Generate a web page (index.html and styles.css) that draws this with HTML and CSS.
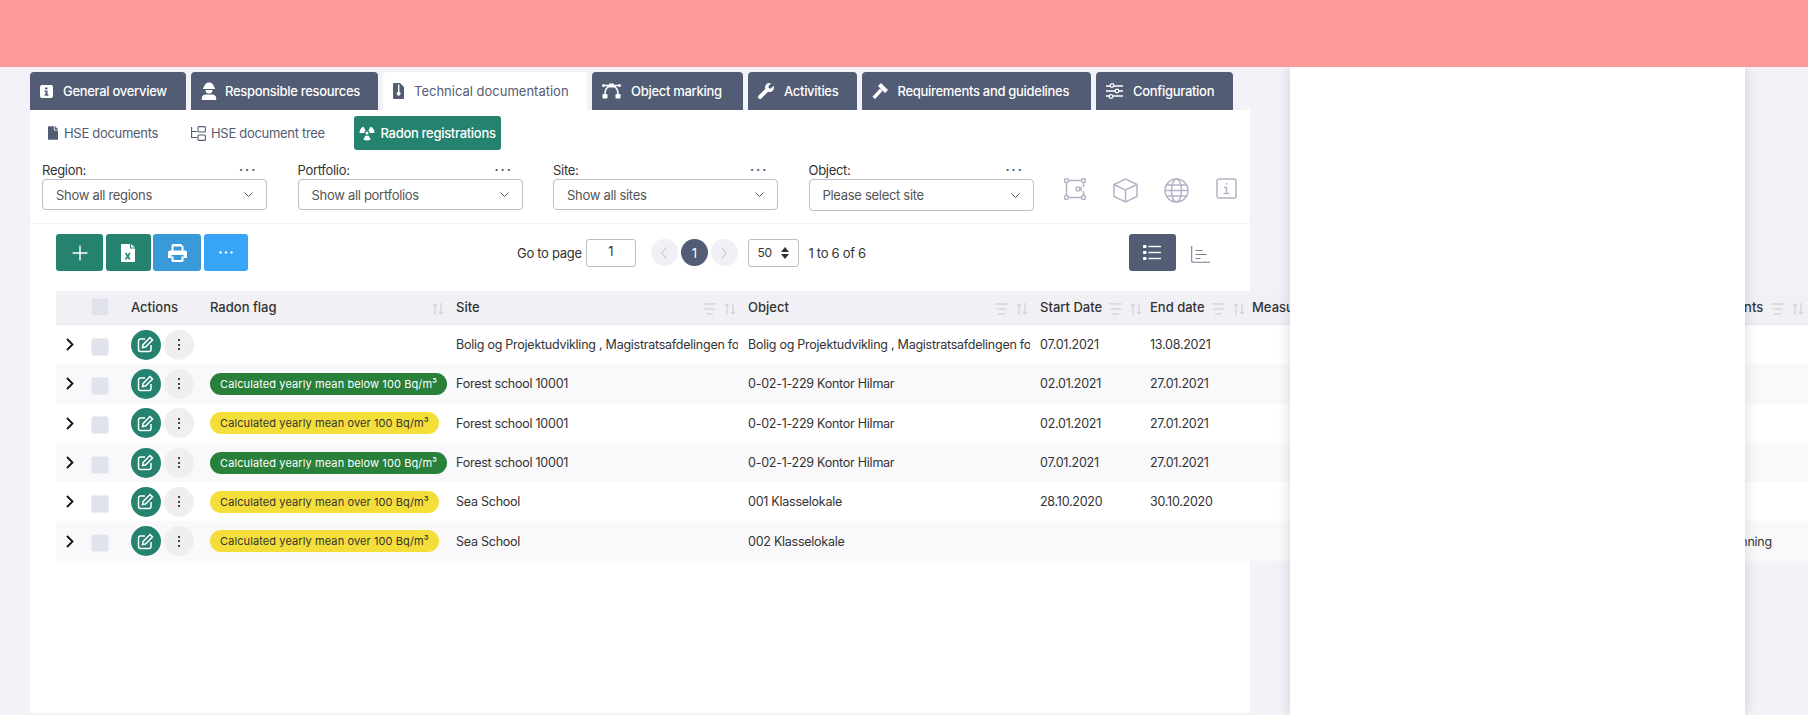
FILE: index.html
```html
<!DOCTYPE html>
<html lang="en">
<head>
    <meta charset="UTF-8">
    <meta name="viewport" content="width=device-width, initial-scale=1.0">
    <title>Radon registrations</title>
    <link rel="stylesheet" href="styles.css">
</head>
<body>
    <div class="topbar"></div>

    <div class="content">
        <div class="tabs">
            <div class="tab">
                <svg width="13" height="13" viewBox="0 0 13 13"><rect width="13" height="13" rx="2" fill="#fff"/><rect x="5" y="2.5" width="2.5" height="1.8" fill="#525c74"/><path d="M4.5 5.5h3v4h1v1.2h-4V9.500h1V6.700h-1z" fill="#525c74"/></svg>
                General overview
            </div>
            <div class="tab tab-people">
                <svg width="16" height="18" viewBox="0 0 16 18" fill="#fff"><path d="M3 5.500a5 5 0 0 1 10 0h1V7H2V5.500z"/><path d="M4.500 8h7a3.500 3.500 0 0 1-7 0z"/><path d="M.8 18v-2a4 4 0 0 1 4-3.500h6.400a4 4 0 0 1 4 3.500v2z"/></svg>
                Responsible resources
            </div>
            <div class="tab tab-active">
                <svg width="11" height="16" viewBox="0 0 11 16"><path d="M1 0h6l4 4v11a1 1 0 0 1-1 1H1a1 1 0 0 1-1-1V1a1 1 0 0 1 1-1z" fill="#525c74"/><path d="M5 1.500h1.400v7.500a1.800 1.800 0 1 1-1.400 0z" fill="#fff"/></svg>
                Technical documentation
            </div>
            <div class="tab">
                <svg width="19" height="16" viewBox="0 0 19 16" fill="#fff"><rect x="7" y=".5" width="5" height="4" rx=".8"/><rect x=".5" y="11" width="5" height="4.500" rx=".8"/><rect x="13.500" y="11" width="5" height="4.500" rx=".8"/><circle cx="1.500" cy="2.500" r="1.500"/><circle cx="17.500" cy="2.500" r="1.500"/><path d="M1.500 2.500h16M3 11C3 7 5 4 8 3M16 11c0-4-2-7-5-8" fill="none" stroke="#fff" stroke-width="1.500"/></svg>
                Object marking
            </div>
            <div class="tab">
                <svg width="16" height="16" viewBox="0 0 512 512" fill="#fff"><path d="M507.730 109.100c-2.240-9.030-13.540-12.090-20.120-5.510l-74.360 74.360-67.880-11.310-11.310-67.880 74.360-74.360c6.620-6.620 3.430-17.900-5.660-20.160-47.380-11.740-99.550.91-136.580 37.930-39.640 39.640-50.550 97.100-34.050 147.200L18.740 402.760c-24.990 24.990-24.990 65.510 0 90.500 24.990 24.990 65.510 24.990 90.500 0l213.210-213.210c50.120 16.710 107.470 5.680 147.370-34.220 37.070-37.070 49.700-89.320 37.910-136.730z"/></svg>
                Activities
            </div>
            <div class="tab">
                <svg width="16" height="16" viewBox="0 0 16 16" fill="#fff"><path d="M9 0l7 7-3 3-7-7z"/><path d="M8 5.500L10.500 8 3 16 .5 13.800z"/></svg>
                Requirements and guidelines
            </div>
            <div class="tab">
                <svg width="17" height="16" viewBox="0 0 17 16" fill="#525c74" stroke="#fff" stroke-width="1.300"><path d="M0 3h17M0 8h17M0 13h17"/><circle cx="6" cy="2.500" r="1.800"/><circle cx="11" cy="8" r="1.800"/><circle cx="5" cy="13.500" r="1.800"/></svg>
                Configuration
            </div>
        </div>

        <div class="panel">
            <div class="subtabs">
                <div class="subtab subtab-doc">
                    <svg width="10" height="14" viewBox="0 0 384 512" fill="#525c74"><path d="M224 136V0H24C10.700 0 0 10.700 0 24v464c0 13.300 10.700 24 24 24h336c13.300 0 24-10.700 24-24V160H248c-13.200 0-24-10.800-24-24zm160-14.100v6.100H256V0h6.100c6.400 0 12.500 2.500 17 7l97.900 98c4.500 4.500 7 10.600 7 16.900z"/></svg>
                    HSE documents
                </div>
                <div class="subtab subtab-tree">
                    <svg width="15" height="15" viewBox="0 0 15 15" fill="none" stroke="#525c74" stroke-width="1.100"><path d="M.6 1v10.500H6M.6 5.500H6"/><rect x="7" y=".6" width="7.400" height="5.400" rx="1"/><rect x="7" y="9" width="7.400" height="5.400" rx="1"/></svg>
                    HSE document tree
                </div>
                <div class="subtab subtab-active">
                    <svg width="16" height="16" viewBox="0 0 16 16" fill="#fff"><path d="M10.800 8H15.500A7.500 7.500 0 0 0 11.750 1.500L9.400 5.570A2.800 2.800 0 0 1 10.800 8Z"/><path d="M5.200 8H.5A7.500 7.500 0 0 1 4.250 1.500L6.600 5.570A2.800 2.800 0 0 0 5.200 8Z"/><path d="M6.600 10.430L4.250 14.500A7.500 7.500 0 0 0 11.750 14.500L9.400 10.430A2.800 2.800 0 0 1 6.600 10.430Z"/><circle cx="8" cy="8" r="1.500"/></svg>
                    Radon registrations
                </div>
            </div>

            <div class="filters">
                <div class="filter">
                    <div class="filter-label"><span>Region:</span><span class="dots">···</span></div>
                    <div class="select"><span>Show all regions</span><svg class="chevron" width="9" height="5" viewBox="0 0 9 5"><path d="M.5.5l4 4 4-4"/></svg></div>
                </div>
                <div class="filter">
                    <div class="filter-label"><span>Portfolio:</span><span class="dots">···</span></div>
                    <div class="select"><span>Show all portfolios</span><svg class="chevron" width="9" height="5" viewBox="0 0 9 5"><path d="M.5.5l4 4 4-4"/></svg></div>
                </div>
                <div class="filter">
                    <div class="filter-label"><span>Site:</span><span class="dots">···</span></div>
                    <div class="select"><span>Show all sites</span><svg class="chevron" width="9" height="5" viewBox="0 0 9 5"><path d="M.5.5l4 4 4-4"/></svg></div>
                </div>
                <div class="filter">
                    <div class="filter-label"><span>Object:</span><span class="dots">···</span></div>
                    <div class="select select-tall"><span>Please select site</span><svg class="chevron" width="9" height="5" viewBox="0 0 9 5"><path d="M.5.5l4 4 4-4"/></svg></div>
                </div>
                <div class="view-icons">
                    <svg width="22" height="22" viewBox="0 0 22 22"><path d="M4 2.500h14M2.500 4v14M4 19.500h14M19.500 4v5M19.500 13v5M18 9.500l-3 1.500M18 12.500l-3-1.500"/><circle cx="2.500" cy="2.500" r="2"/><circle cx="19.500" cy="2.500" r="2"/><circle cx="2.500" cy="19.500" r="2"/><circle cx="19.500" cy="19.500" r="2"/><circle cx="14" cy="11" r="2"/></svg>
                    <svg width="25" height="25" viewBox="0 0 25 25"><path d="M12.500 1L24 6.500v12L12.500 24 1 18.500v-12zM1 6.500l11.500 5.500L24 6.500M12.500 12v12"/></svg>
                    <svg width="25" height="25" viewBox="0 0 25 25"><circle cx="12.500" cy="12.500" r="11.500"/><ellipse cx="12.500" cy="12.500" rx="5" ry="11.500"/><path d="M1 12.500h23M2.500 7h20M2.500 18h20"/></svg>
                    <svg width="21" height="21" viewBox="0 0 21 21"><rect x="1" y="1" width="19" height="19" rx="2"/><path d="M10.500 5v1.500M8 9.500h2.500v6M7.500 15.500h6"/></svg>
                </div>
            </div>

            <div class="toolbar">
                <div class="actions">
                    <button class="btn btn-add"><svg width="16" height="16" viewBox="0 0 16 16" stroke="#fff" stroke-width="1.400"><path d="M8 .5v15M.5 8h15"/></svg></button>
                    <button class="btn btn-excel"><svg width="14" height="18" viewBox="0 0 14 18"><path d="M0 1a1 1 0 0 1 1-1h8v4.500h5V17a1 1 0 0 1-1 1H1a1 1 0 0 1-1-1z" fill="#fff"/><path d="M10 0l4 3.500h-4z" fill="#fff"/><path d="M4.500 9l4.500 6.500M9 9l-4.500 6.500" stroke="#25826e" stroke-width="1.600"/></svg></button>
                    <button class="btn btn-print"><svg width="19" height="18" viewBox="0 0 19 18" fill="#fff"><path d="M3.500 7V1.500A1.500 1.500 0 0 1 5 0h8l2.500 2.500V7h-2V2.500H5.500V7z"/><path d="M2 6.500h15a2 2 0 0 1 2 2v5.500h-3.500v-3h-12v3H0V8.500a2 2 0 0 1 2-2z"/><path d="M5.500 12.500h8V16h-8zM3.500 12.500V17a1 1 0 0 0 1 1h10a1 1 0 0 0 1-1v-4.500z" fill-rule="evenodd"/></svg></button>
                    <button class="btn btn-more"><svg width="14" height="3" viewBox="0 0 14 3" fill="#fff"><circle cx="1.500" cy="1.500" r="1.200"/><circle cx="7" cy="1.500" r="1.200"/><circle cx="12.500" cy="1.500" r="1.200"/></svg></button>
                </div>
                <div class="pager">
                    <span class="goto-label">Go to page</span>
                    <input class="goto-input" type="text" value="1">
                    <div class="pages">
                        <span class="page-btn"><svg width="6" height="12" viewBox="0 0 6 12"><path d="M5.500.5L.7 6l4.800 5.500"/></svg></span>
                        <span class="page-btn page-current">1</span>
                        <span class="page-btn"><svg width="6" height="12" viewBox="0 0 6 12"><path d="M.5.5L5.300 6 .5 11.500"/></svg></span>
                    </div>
                    <div class="page-size"><span>50</span><svg width="8" height="12" viewBox="0 0 8 12" fill="#333"><path d="M4 0l4 5H0zM4 12l4-5H0z"/></svg></div>
                    <span class="page-count">1 to 6 of 6</span>
                </div>
                <div class="view-switch">
                    <button class="btn-view"><svg width="18" height="15" viewBox="0 0 18 15" fill="#fff"><rect x="0" y="0" width="3.500" height="3" rx=".8"/><rect x="0" y="6" width="3.500" height="3" rx=".8"/><rect x="0" y="12" width="3.500" height="3" rx=".8"/><rect x="5.500" y=".8" width="12.500" height="1.400"/><rect x="5.500" y="6.800" width="12.500" height="1.400"/><rect x="5.500" y="12.800" width="12.500" height="1.400"/></svg></button>
                    <svg class="chart-icon" width="19" height="17" viewBox="0 0 19 17"><path d="M.7 0v15a1.300 1.300 0 0 0 1.300 1.300h17M4.500 4.500h7M4.500 8.500h11M4.500 12.500h5"/></svg>
                </div>
            </div>

            <table class="grid">
                <colgroup>
                    <col class="col-expand"><col class="col-check"><col class="col-actions"><col class="col-flag">
                    <col class="col-site"><col class="col-object"><col class="col-start"><col class="col-end">
                    <col class="col-measure"><col class="col-comments">
                </colgroup>
                <thead>
                    <tr>
                        <th></th>
                        <th><span class="checkbox checkbox-head"></span></th>
                        <th>Actions</th>
                        <th><div class="th-inner"><span>Radon flag</span><span class="th-icons"><svg class="sort" width="12" height="12" viewBox="0 0 12 12"><path d="M3 12V1M.8 3.200L3 1l2.200 2.200M9 0v11M6.800 8.800L9 11l2.200-2.200"/></svg></span></div></th>
                        <th><div class="th-inner"><span>Site</span><span class="th-icons"><svg class="lines" width="13" height="12" viewBox="0 0 13 12"><path d="M0 1h13M1.500 6h10M3 11h7"/></svg><svg class="sort" width="12" height="12" viewBox="0 0 12 12"><path d="M3 12V1M.8 3.200L3 1l2.200 2.200M9 0v11M6.800 8.800L9 11l2.200-2.200"/></svg></span></div></th>
                        <th><div class="th-inner"><span>Object</span><span class="th-icons"><svg class="lines" width="13" height="12" viewBox="0 0 13 12"><path d="M0 1h13M1.500 6h10M3 11h7"/></svg><svg class="sort" width="12" height="12" viewBox="0 0 12 12"><path d="M3 12V1M.8 3.200L3 1l2.200 2.200M9 0v11M6.800 8.800L9 11l2.200-2.200"/></svg></span></div></th>
                        <th><div class="th-inner"><span>Start Date</span><span class="th-icons"><svg class="lines" width="13" height="12" viewBox="0 0 13 12"><path d="M0 1h13M1.500 6h10M3 11h7"/></svg><svg class="sort" width="12" height="12" viewBox="0 0 12 12"><path d="M3 12V1M.8 3.200L3 1l2.200 2.200M9 0v11M6.800 8.800L9 11l2.200-2.200"/></svg></span></div></th>
                        <th><div class="th-inner"><span>End date</span><span class="th-icons"><svg class="lines" width="13" height="12" viewBox="0 0 13 12"><path d="M0 1h13M1.500 6h10M3 11h7"/></svg><svg class="sort" width="12" height="12" viewBox="0 0 12 12"><path d="M3 12V1M.8 3.200L3 1l2.200 2.200M9 0v11M6.800 8.800L9 11l2.200-2.200"/></svg></span></div></th>
                        <th>Measurement</th>
                        <th><div class="th-inner th-comments"><span>Comments</span><span class="th-icons"><svg class="lines" width="13" height="12" viewBox="0 0 13 12"><path d="M0 1h13M1.500 6h10M3 11h7"/></svg><svg class="sort" width="12" height="12" viewBox="0 0 12 12"><path d="M3 12V1M.8 3.200L3 1l2.200 2.200M9 0v11M6.800 8.800L9 11l2.200-2.200"/></svg></span></div></th>
                    </tr>
                </thead>
                <tbody id="rows"></tbody>
            </table>
        </div>
    </div>

    <div class="side-panel"></div>

    <script>
        const registrations = [
            { flag: '', site: 'Bolig og Projektudvikling , Magistratsafdelingen for Teknik', object: 'Bolig og Projektudvikling , Magistratsafdelingen for Teknik', start: '07.01.2021', end: '13.08.2021', comment: '' },
            { flag: 'below', site: 'Forest school 10001', object: '0-02-1-229 Kontor Hilmar', start: '02.01.2021', end: '27.01.2021', comment: '' },
            { flag: 'over', site: 'Forest school 10001', object: '0-02-1-229 Kontor Hilmar', start: '02.01.2021', end: '27.01.2021', comment: '' },
            { flag: 'below', site: 'Forest school 10001', object: '0-02-1-229 Kontor Hilmar', start: '07.01.2021', end: '27.01.2021', comment: '' },
            { flag: 'over', site: 'Sea School', object: '001 Klasselokale', start: '28.10.2020', end: '30.10.2020', comment: '' },
            { flag: 'over', site: 'Sea School', object: '002 Klasselokale', start: '', end: '', comment: 'Test planning' },
        ];

        const editIcon = '<svg width="17" height="17" viewBox="0 0 17 17" fill="none" stroke="#fff" stroke-width="1.500"><path d="M8 3H3.500A2 2 0 0 0 1.500 5v8.500a2 2 0 0 0 2 2H12a2 2 0 0 0 2-2V9"/><path d="M13 1.500l2.500 2.500-7 7-3 .6.500-3z"/></svg>';

        function flagPill(flag) {
            if (flag === 'below') return '<span class="pill pill-below">Calculated yearly mean below 100 Bq/m³</span>';
            if (flag === 'over') return '<span class="pill pill-over">Calculated yearly mean over 100 Bq/m³</span>';
            return '';
        }

        document.getElementById('rows').innerHTML = registrations.map(r => `
            <tr>
                <td><svg class="expand" width="8" height="13" viewBox="0 0 8 13"><path d="M1 1l5.500 5.500L1 12"/></svg></td>
                <td><span class="checkbox"></span></td>
                <td><div class="row-actions"><span class="round round-edit">${editIcon}</span><span class="round round-more"><i></i><i></i><i></i></span></div></td>
                <td>${flagPill(r.flag)}</td>
                <td><div class="clip">${r.site}</div></td>
                <td><div class="clip">${r.object}</div></td>
                <td>${r.start}</td>
                <td>${r.end}</td>
                <td></td>
                <td>${r.comment}</td>
            </tr>`).join('');
    </script>
</body>
</html>
```

FILE: styles.css
```css
body {
    font-family: Inter, "Open Sans", sans-serif;
    font-size: 13px;
    letter-spacing: -0.3px;
    color: #333;
    background: #f3f2f8;
    margin: 0;
    height: 715px;
    overflow: hidden;
    position: relative;
}

.topbar {
    height: 67px;
    background: #ff9a9a;
    position: relative;
    z-index: 3;
}

.content {
    width: 1220px;
    margin-left: 30px;
    padding-top: 5px;
}

/* tabs */
.tabs {
    display: grid;
    grid-template-columns: 156px 187px 204px 151px 108.500px 229.500px 137px;
    column-gap: 5px;
    height: 38px;
}

.tab {
    display: flex;
    align-items: center;
    gap: 10px;
    padding-left: 10px;
    background: #525c74;
    color: #fff;
    font-weight: 500;
    border-radius: 4px 4px 0 0;
    white-space: nowrap;
}

.tab-people {
    gap: 8px;
}

.tab-active {
    background: #fff;
    color: #525c74;
    font-weight: 400;
    letter-spacing: 0;
}

.panel {
    background: #fff;
    height: 603px;
}

/* sub tabs */
.subtabs {
    display: flex;
    align-items: stretch;
    height: 34px;
    padding-top: 6px;
}

.subtab {
    display: flex;
    align-items: center;
    gap: 6px;
    color: #525c74;
    white-space: nowrap;
}

.subtab-doc {
    margin-left: 18px;
    width: 143px;
}

.subtab-tree {
    width: 162.5px;
    gap: 5px;
}

.subtab-active {
    width: 147px;
    padding-left: 5px;
    box-sizing: border-box;
    background: #25826e;
    color: #fff;
    font-weight: 500;
    border-radius: 3px;
}

/* filters */
.filters {
    display: flex;
    gap: 30.5px;
    margin-top: 10px;
    padding: 0 0 12px 12px;
    border-bottom: 1px solid #f3f2f8;
}

.filter {
    width: 225px;
}

.filter-label {
    display: flex;
    justify-content: space-between;
    align-items: center;
    height: 19px;
    padding-right: 10px;
    color: #333;
}

.dots {
    font-size: 16px;
    letter-spacing: 1.5px;
    color: #555;
}

.select {
    display: flex;
    justify-content: space-between;
    align-items: center;
    box-sizing: border-box;
    height: 31px;
    padding: 0 13px;
    border: 1px solid #b9bdca;
    border-radius: 4px;
    color: #555;
    background: #fff;
}

.select-tall {
    height: 32px;
}

.chevron {
    fill: none;
    stroke: #555;
}

.view-icons {
    display: flex;
    align-items: flex-start;
    gap: 26.500px;
    padding-top: 18px;
}

.view-icons svg {
    fill: none;
    stroke: #b3b4c6;
    stroke-width: 1.5;
}

/* toolbar */
.toolbar {
    display: grid;
    grid-template-columns: 461px 612px auto;
    height: 37px;
    padding: 10px 0 0 26px;
}

.actions {
    display: flex;
    gap: 2.5px;
}

.btn {
    display: flex;
    align-items: center;
    justify-content: center;
    height: 37px;
    padding: 0;
    border: 0;
    border-radius: 3px;
    color: #fff;
}

.btn-add { width: 47px; background: #25826e; }
.btn-excel { width: 45px; background: #25826e; }
.btn-print { width: 48px; background: #3a9ad9; }
.btn-more { width: 44px; background: #38a4f8; }

.pager {
    display: flex;
    align-items: center;
    height: 37px;
    white-space: nowrap;
}

.goto-label {
    width: 69px;
}

.goto-input {
    box-sizing: border-box;
    width: 50px;
    height: 28px;
    margin: 0 15px 0 0;
    border: 1px solid #b9bdca;
    border-radius: 3px;
    font: inherit;
    text-align: center;
    color: #333;
    padding: 0 0 3px;
}

.pages {
    display: flex;
    gap: 3.5px;
    margin-right: 10px;
}

.page-btn {
    display: flex;
    align-items: center;
    justify-content: center;
    width: 26.500px;
    height: 27px;
    border-radius: 50%;
    background: #f1f0f5;
}

.page-btn svg {
    fill: none;
    stroke: #b9bdca;
}

.page-current {
    background: #525c74;
    color: #fff;
}

.page-size {
    display: flex;
    align-items: center;
    justify-content: space-between;
    box-sizing: border-box;
    width: 51px;
    height: 28px;
    margin-right: 10px;
    padding: 0 9px;
    border: 1px solid #b9bdca;
    border-radius: 3px;
    font-size: 12px;
}

.view-switch {
    display: flex;
    align-items: center;
    gap: 15px;
}

.btn-view {
    display: flex;
    align-items: center;
    justify-content: center;
    width: 46.500px;
    height: 37px;
    padding: 0;
    border: 0;
    border-radius: 3px;
    background: #525c74;
}

.chart-icon {
    margin-top: 4px;
    fill: none;
    stroke: #777e90;
    stroke-width: 1.1;
}

/* table */
.grid {
    width: 1790px;
    margin: 20px 0 0 26px;
    border-collapse: collapse;
    table-layout: fixed;
}

.col-expand { width: 30px; }
.col-check { width: 40px; }
.col-actions { width: 79px; }
.col-flag { width: 246px; }
.col-site { width: 292px; }
.col-object { width: 292px; }
.col-start { width: 110px; }
.col-end { width: 102px; }
.col-measure { width: 444px; }
.col-comments { width: 155px; }

.grid th {
    height: 32px;
    padding: 0 5px;
    background: #f1f0f5;
    border-bottom: 2px solid #ebeaf1;
    font-weight: 500;
    letter-spacing: 0;
    text-align: left;
    white-space: nowrap;
    overflow: hidden;
    color: #333;
}

.th-inner {
    display: flex;
    justify-content: space-between;
    gap: 7px;
}

.th-comments {
    width: 110px;
}

.th-icons {
    display: flex;
    gap: 8px;
    margin-top: 4px;
    padding-right: 2px;
}

.lines, .sort {
    fill: none;
    stroke: #c9c9cf;
}

.grid td {
    height: 39.300px;
    padding: 0 5px;
    font-size: 12.5px;
    letter-spacing: -0.25px;
    white-space: nowrap;
    overflow: hidden;
}

.clip {
    overflow: hidden;
}

.grid tbody tr:nth-child(even) td {
    background: #f9f9fb;
}

.grid tbody tr:nth-child(odd) td {
    background: #fff;
}

.expand {
    display: block;
    margin-left: 5px;
    fill: none;
    stroke: #111;
    stroke-width: 1.8;
}

.checkbox {
    display: block;
    box-sizing: border-box;
    width: 18px;
    height: 18px;
    margin: 4px 0 0 -0.500px;
    background: #e0e3eb;
    border: 1px solid #eceef3;
    border-radius: 3px;
}

.checkbox-head {
    margin-top: 0;
}

.row-actions {
    display: flex;
    gap: 3px;
    margin-left: -0.500px;
}

.round {
    display: flex;
    align-items: center;
    justify-content: center;
    width: 30px;
    height: 30px;
    border-radius: 50%;
}

.round-edit {
    background: #25826e;
}

.round-more {
    flex-direction: column;
    gap: 2.500px;
    background: #efefef;
}

.round-more i {
    width: 2px;
    height: 2px;
    background: #55393c;
}

.pill {
    display: inline-block;
    height: 22px;
    line-height: 22px;
    padding: 0 10px;
    border-radius: 11px;
    font-size: 11px;
    letter-spacing: 0.1px;
    vertical-align: middle;
}

.pill-below {
    background: #28803a;
    color: #fff;
}

.pill-over {
    background: #f3de3a;
    color: #333;
}

/* panel that lies over the page */
.side-panel {
    position: absolute;
    top: 67px;
    bottom: 0;
    left: 1290px;
    width: 455px;
    background: #fff;
    box-shadow: 0 0 12px rgba(60, 60, 90, 0.2);
    z-index: 2;
}
```
